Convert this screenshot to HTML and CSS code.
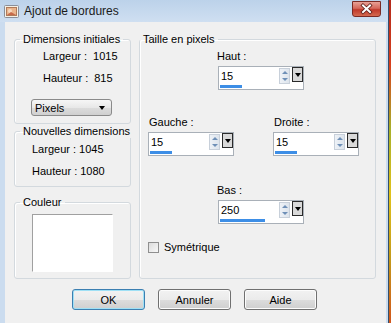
FILE: index.html
```html
<!DOCTYPE html>
<html lang="fr">
<head>
    <meta charset="UTF-8">
    <title>Ajout de bordures</title>
    <link rel="stylesheet" href="styles.css">
</head>
<body>
<div class="screen">
    <div class="window">
        <div class="titlebar">
            <svg class="app-icon" width="15" height="15" viewBox="0 0 15 15">
                <rect x="0.5" y="1.5" width="14" height="12" rx="1" fill="#f4f0e6" stroke="#8a8f99"/>
                <rect x="2.5" y="3.5" width="10" height="8" fill="#e9b48c" stroke="#b07a5a"/>
                <circle cx="6" cy="7" r="2" fill="#f6d9c0"/>
                <path d="M3 11 L7 8 L12 11 Z" fill="#c76a4a"/>
            </svg>
            <span class="title">Ajout de bordures</span>
            <div class="close">
                <svg width="29" height="16" viewBox="0 0 29 16">
                    <path d="M11 4.5 L18 11 M18 4.5 L11 11" stroke="#5a1a14" stroke-width="3.6" stroke-linecap="square"/>
                    <path d="M11 4.5 L18 11 M18 4.5 L11 11" stroke="#fff" stroke-width="2" stroke-linecap="square"/>
                </svg>
            </div>
        </div>

        <div class="client">
            <div class="panes">
                <div class="left-col">
                    <fieldset class="group">
                        <legend>Dimensions initiales</legend>
                        <div class="group-body g-initial">
                            <div class="dim-row"><span>Largeur :</span><span>1015</span></div>
                            <div class="dim-row"><span>Hauteur :</span><span>815</span></div>
                            <div class="combo">
                                <span>Pixels</span>
                                <span class="combo-arrow"></span>
                            </div>
                        </div>
                    </fieldset>
                    <fieldset class="group g-new-box">
                        <legend>Nouvelles dimensions</legend>
                        <div class="group-body g-new">
                            <div class="dim-row"><span>Largeur :</span><span>1045</span></div>
                            <div class="dim-row"><span>Hauteur :</span><span>1080</span></div>
                        </div>
                    </fieldset>
                    <fieldset class="group g-color-box">
                        <legend>Couleur</legend>
                        <div class="group-body g-color">
                            <div class="swatch"></div>
                        </div>
                    </fieldset>
                </div>

                <fieldset class="group g-size">
                    <legend>Taille en pixels</legend>
                    <div class="size-row center">
                        <div class="field">
                            <label>Haut :</label>
                            <div class="spin">
                                <span class="spin-value">15</span>
                                <span class="spin-arrows"><i class="up"></i><i class="down"></i></span>
                                <span class="spin-drop"></span>
                                <span class="spin-bar" style="width: 22px"></span>
                            </div>
                        </div>
                    </div>
                    <div class="size-row sides">
                        <div class="field">
                            <label>Gauche :</label>
                            <div class="spin">
                                <span class="spin-value">15</span>
                                <span class="spin-arrows"><i class="up"></i><i class="down"></i></span>
                                <span class="spin-drop"></span>
                                <span class="spin-bar" style="width: 22px"></span>
                            </div>
                        </div>
                        <div class="field">
                            <label>Droite :</label>
                            <div class="spin">
                                <span class="spin-value">15</span>
                                <span class="spin-arrows"><i class="up"></i><i class="down"></i></span>
                                <span class="spin-drop"></span>
                                <span class="spin-bar" style="width: 22px"></span>
                            </div>
                        </div>
                    </div>
                    <div class="size-row center bottom">
                        <div class="field">
                            <label>Bas :</label>
                            <div class="spin">
                                <span class="spin-value">250</span>
                                <span class="spin-arrows"><i class="up"></i><i class="down"></i></span>
                                <span class="spin-drop"></span>
                                <span class="spin-bar" style="width: 45px"></span>
                            </div>
                        </div>
                    </div>
                    <label class="check"><span class="box"></span>Symétrique</label>
                </fieldset>
            </div>

            <div class="buttons">
                <button class="btn default">OK</button>
                <button class="btn">Annuler</button>
                <button class="btn">Aide</button>
            </div>
        </div>
    </div>
    <div class="backdrop"></div>
</div>
</body>
</html>
```

FILE: styles.css
```css
body {
    margin: 0;
    font-family: "Liberation Sans", Arial, sans-serif;
    font-size: 11px;
    color: #000;
}
.screen {
    display: flex;
    width: 391px;
    height: 323px;
    overflow: hidden;
}
.window {
    width: 388px;
    display: flex;
    flex-direction: column;
    border-right: 1px solid #34506e;
}
.backdrop {
    flex: 1;
    background: linear-gradient(#b42a1c, #d8401e 20%, #a8b02a 40%, #e0c21c 60%, #c49a1a 80%, #d2561c);
}
.titlebar {
    height: 22px;
    display: flex;
    align-items: center;
    padding-left: 4px;
    background: linear-gradient(#bcd2ea, #cfdff1);
}
.app-icon {
    margin-right: 5px;
}
.title {
    flex: 1;
    font-size: 12px;
    color: #1a1a1a;
}
.close {
    align-self: flex-start;
    margin: 1px 7px 0 0;
    width: 29px;
    height: 16px;
    border-radius: 0 0 3px 3px;
    border: 1px solid #7b2a24;
    box-sizing: border-box;
    background: linear-gradient(#e8a196, #d5675a 45%, #c0392b 55%, #d46a50);
}
.close svg {
    display: block;
    margin: -1px 0 0 -1px;
}
.client {
    flex: 1;
    display: flex;
    flex-direction: column;
    background: #f0f0f0;
    border-left: 5px solid #cbdcef;
    border-right: 2px solid #cbdcef;
    padding: 11px 10px 0 9px;
}
.panes {
    display: flex;
    gap: 8px;
}
.left-col {
    width: 117px;
    display: flex;
    flex-direction: column;
}
.group {
    margin: 0;
    padding: 0;
    min-width: 0;
    border: 1px solid #d3d9de;
    border-radius: 3px;
    box-shadow: inset 1px 1px 0 #fff;
}
.group legend {
    padding: 0 3px;
    margin-left: 5px;
    line-height: 13px;
    white-space: nowrap;
}
.dim-row {
    display: flex;
    gap: 6px;
    line-height: 13px;
}
.g-initial {
    padding: 4px 0 7px 28px;
}
.g-initial .dim-row + .dim-row {
    margin-top: 9px;
}
.g-new-box {
    margin-top: 1px;
}
.g-new {
    padding: 5px 0 8px 17px;
}
.g-new .dim-row {
    gap: 3px;
}
.g-new .dim-row + .dim-row {
    margin-top: 9px;
}
.combo {
    margin: 14px 0 0 -12px;
    width: 81px;
    height: 17px;
    box-sizing: border-box;
    border: 1px solid #8a8a8a;
    border-radius: 3px;
    background: linear-gradient(#f6f6f6, #e8e8e8 50%, #dcdcdc 51%, #d0d0d0);
    display: flex;
    align-items: center;
    justify-content: space-between;
    padding: 0 6px 0 3px;
}
.combo-arrow {
    border-left: 3.5px solid transparent;
    border-right: 3.5px solid transparent;
    border-top: 4px solid #000;
}
.g-color-box {
    margin-top: 9px;
    flex: 1;
}
.g-color {
    padding: 5px 0 6px 17px;
}
.swatch {
    width: 81px;
    height: 58px;
    box-sizing: border-box;
    background: #fff;
    border: 1px solid #fff;
    border-top-color: #a0a0a0;
    border-left-color: #a0a0a0;
}
.g-size {
    width: 237px;
    box-sizing: border-box;
    padding: 4px 0 0 0;
}
.g-size legend {
    margin-left: 0;
}
.size-row {
    display: flex;
}
.size-row.center {
    padding-left: 77px;
}
.size-row.sides {
    margin-top: 26px;
    padding-left: 8px;
    gap: 39px;
}
.size-row.bottom {
    margin-top: 28px;
}
.field label {
    display: block;
    line-height: 13px;
    margin-bottom: 3px;
}
.sides .field label {
    padding-left: 1px;
}
.spin {
    position: relative;
    width: 86px;
    height: 24px;
    box-sizing: border-box;
    border: 1px solid #a9b0b8;
    background: #fff;
    display: flex;
    margin-left: 1px;
}
.sides .spin {
    margin-left: 0;
}
.spin-value {
    flex: 1;
    padding: 3px 0 0 2px;
    line-height: 13px;
}
.spin-arrows {
    width: 9px;
    height: 14px;
    margin-top: 1px;
    display: flex;
    flex-direction: column;
    justify-content: space-around;
    align-items: center;
    background: linear-gradient(90deg, #eef2f7, #dde4ec);
    border: 1px solid #c8d0da;
}
.spin-arrows i {
    border-left: 3px solid transparent;
    border-right: 3px solid transparent;
}
.spin-arrows .up {
    border-bottom: 3px solid #6e8fb7;
}
.spin-arrows .down {
    border-top: 3px solid #6e8fb7;
}
.spin-drop {
    width: 11px;
    height: 15px;
    margin: 0 0 0 2px;
    box-sizing: border-box;
    border: 1px solid #2a2a2a;
    background: #d9d9d9;
    display: flex;
    align-items: center;
    justify-content: center;
}
.spin-drop::after {
    content: "";
    border-left: 3px solid transparent;
    border-right: 3px solid transparent;
    border-top: 4px solid #000;
}
.spin-bar {
    position: absolute;
    left: 1px;
    bottom: 1px;
    height: 3px;
    background: #3d8ee6;
}
.check {
    display: flex;
    align-items: center;
    gap: 5px;
    margin: 17px 0 0 8px;
    line-height: 13px;
}
.check .box {
    width: 11px;
    height: 11px;
    box-sizing: border-box;
    border: 1px solid #8f8f8f;
    background: linear-gradient(135deg, #dcdcdc, #f8f8f8);
}
.buttons {
    display: flex;
    justify-content: center;
    gap: 13px;
    margin-top: 10px;
    padding-right: 1px;
}
.btn {
    width: 73px;
    height: 21px;
    padding: 0;
    font: inherit;
    color: #000;
    border: 1px solid #707070;
    border-radius: 3px;
    background: linear-gradient(#f2f2f2, #ebebeb 50%, #dddddd 51%, #cfcfcf);
    box-shadow: inset 0 0 0 1px #fcfcfc;
}
.btn.default {
    border-color: #3c7fb1;
    box-shadow: inset 0 0 0 1px #9fe0f5;
}
```
